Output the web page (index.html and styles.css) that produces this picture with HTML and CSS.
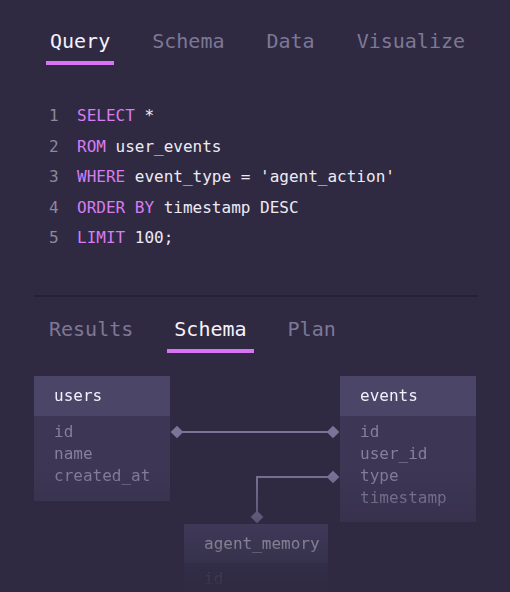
FILE: index.html
```html
<!DOCTYPE html>
<html lang="en">
<head>
<meta charset="utf-8">
<title>Query editor</title>
<link rel="stylesheet" href="styles.css">
</head>
<body>
<div class="app">
  <nav class="tabs tabs-top">
    <span class="tab active">Query</span>
    <span class="tab">Schema</span>
    <span class="tab">Data</span>
    <span class="tab">Visualize</span>
  </nav>

  <div class="code">
    <div class="line"><span class="ln">1</span><span class="src"><span class="kw">SELECT</span> *</span></div>
    <div class="line"><span class="ln">2</span><span class="src"><span class="kw">ROM</span> user_events</span></div>
    <div class="line"><span class="ln">3</span><span class="src"><span class="kw">WHERE</span> event_type = 'agent_action'</span></div>
    <div class="line"><span class="ln">4</span><span class="src"><span class="kw">ORDER BY</span> timestamp DESC</span></div>
    <div class="line"><span class="ln">5</span><span class="src"><span class="kw">LIMIT</span> 100;</span></div>
  </div>

  <div class="divider"></div>

  <nav class="tabs tabs-bottom">
    <span class="tab">Results</span>
    <span class="tab active">Schema</span>
    <span class="tab">Plan</span>
  </nav>

  <div class="diagram">
    <svg class="links" width="510" height="216" viewBox="0 0 510 216">
      <line x1="177" y1="56" x2="333" y2="56" class="wire"/>
      <polyline points="333,101 257,101 257,141" class="wire" fill="none"/>
      <rect x="172.5" y="51.5" width="9" height="9" transform="rotate(45 177 56)" class="dot"/>
      <rect x="328.5" y="51.5" width="9" height="9" transform="rotate(45 333 56)" class="dot"/>
      <rect x="328.5" y="96.5" width="9" height="9" transform="rotate(45 333 101)" class="dot"/>
      <rect x="252.5" y="136.5" width="9" height="9" transform="rotate(45 257 141)" class="dot"/>
    </svg>

    <div class="table t-users">
      <div class="thead">users</div>
      <div class="tbody">
        <div>id</div>
        <div>name</div>
        <div>created_at</div>
      </div>
    </div>

    <div class="table t-events">
      <div class="thead">events</div>
      <div class="tbody">
        <div>id</div>
        <div>user_id</div>
        <div>type</div>
        <div>timestamp</div>
      </div>
    </div>

    <div class="table t-memory">
      <div class="thead">agent_memory</div>
      <div class="tbody">
        <div>id</div>
      </div>
    </div>
  </div>
</div>
</body>
</html>
```

FILE: styles.css
```css
html, body {
  margin: 0;
  padding: 0;
  background: #2f2a42;
}

body {
  font-family: "DejaVu Sans Mono", "Liberation Mono", monospace;
  color: #f2eef8;
}

.app {
  width: 510px;
  height: 592px;
  overflow: hidden;
}

.tabs {
  display: flex;
  font-size: 20px;
  line-height: 24px;
}

.tab {
  color: #7d7895;
  border-bottom: 4px solid transparent;
}

.tab.active {
  color: #f6f2fb;
  border-bottom-color: #d873f5;
}

.tabs-top {
  gap: 34px;
  padding: 29px 0 0 46px;
}

.tabs-top .tab {
  padding: 0 4px 8px;
}

.code {
  margin-top: 36px;
  padding-left: 49px;
  font-size: 16px;
  line-height: 30.5px;
}

.line {
  display: flex;
}

.ln {
  width: 28px;
  color: #8d889d;
}

.src {
  color: #eeeaf4;
  white-space: pre;
}

.kw {
  color: #d77cf2;
}

.divider {
  margin: 41px 32px 0 34px;
  height: 2px;
  background: #262134;
}

.tabs-bottom {
  gap: 27px;
  padding-left: 42px;
  margin-top: 20px;
}

.tabs-bottom .tab {
  padding: 0 7px 8px;
}

.diagram {
  position: relative;
  margin-top: 23px;
  height: 216px;
  -webkit-mask-image: linear-gradient(to bottom, #000 94px, rgba(0,0,0,0) 222px);
  mask-image: linear-gradient(to bottom, #000 94px, rgba(0,0,0,0) 222px);
}

.links {
  position: absolute;
  left: 0;
  top: 0;
}

.wire {
  stroke: #7a7397;
  stroke-width: 2;
}

.dot {
  fill: #7b7499;
}

.table {
  position: absolute;
  width: 136px;
  font-size: 16px;
}

.thead {
  height: 40px;
  line-height: 40px;
  padding-left: 20px;
  background: #4b4568;
  color: #f4f0fa;
}

.tbody {
  background: #3d3755;
  color: #857f9c;
  padding: 5px 20px 14px;
  line-height: 22px;
}

.t-users {
  left: 34px;
  top: 0;
}

.t-events {
  left: 340px;
  top: 0;
}

.t-events .tbody {
  padding-bottom: 13px;
}

.t-memory {
  left: 184px;
  top: 148px;
  width: 144px;
}

.t-memory .thead {
  height: 39px;
  line-height: 39px;
}
```
